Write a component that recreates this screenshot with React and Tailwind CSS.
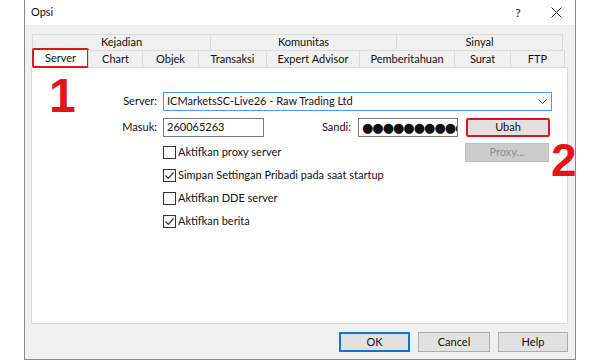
import React, { useState } from "react";

const font = { fontFamily: 'Lato, "Noto Sans", sans-serif' };
const digitFont = { fontFamily: '"Liberation Sans", Arial, sans-serif' };

const topTabs = [
  { label: "Kejadian", w: "w-[179px]" },
  { label: "Komunitas", w: "w-[187px]" },
  { label: "Sinyal", w: "w-[167px]" },
];

const bottomTabs = [
  { label: "Chart", w: "w-[55px]" },
  { label: "Objek", w: "w-[57px]" },
  { label: "Transaksi", w: "w-[69px]" },
  { label: "Expert Advisor", w: "w-[94px]" },
  { label: "Pemberitahuan", w: "w-[96px]" },
  { label: "Surat", w: "w-[57px]" },
  { label: "FTP", w: "w-[55px]" },
];

const Check = ({ checked, label, onToggle }) => (
  <label className="flex items-center h-[23px] cursor-default" onClick={onToggle}>
    <span className="w-[13px] h-[13px] border border-[#333] bg-white flex items-center justify-center mr-[2px] shrink-0">
      {checked && (
        <svg width="11" height="11" viewBox="0 0 11 11">
          <path d="M1.5 5.5 L4.3 8.3 L9.5 2.5" fill="none" stroke="#333" strokeWidth="1.2" />
        </svg>
      )}
    </span>
    <span className="text-[11px] text-[#111] whitespace-nowrap">{label}</span>
  </label>
);

const App = () => {
  const [checks, setChecks] = useState({
    proxy: false,
    simpan: true,
    dde: false,
    berita: true,
  });
  const toggle = (k) => setChecks({ ...checks, [k]: !checks[k] });

  return (
    <div className="w-[600px] h-[360px] bg-white" style={font}>
      <div className="ml-[24px] w-[552px] h-[360px] border border-[#8a8a8a] border-t-0 flex flex-col bg-[#f0f0f0]">
        {/* title bar */}
        <div className="h-[25px] bg-white flex items-center pl-[6px] text-[11px] text-[#111]">
          <span className="flex-1">Opsi</span>
          <span className="w-[38px] text-center text-[12px]">?</span>
          <span className="w-[38px] flex justify-center">
            <svg width="11" height="11" viewBox="0 0 11 11">
              <path d="M0.5 0.5 L10.5 10.5 M10.5 0.5 L0.5 10.5" stroke="#222" strokeWidth="1" />
            </svg>
          </span>
        </div>

        <div className="flex-1 flex flex-col pl-[6px] pr-[8px] pt-[9px]">
          {/* tabs */}
          <div className="flex text-[11px] text-[#111] h-[16px] pl-[1px]">
            {topTabs.map((t) => (
              <div
                key={t.label}
                className={`${t.w} h-[16px] border border-b-0 border-[#dadada] bg-[#f0f0f0] flex items-center justify-center -ml-px first:ml-0`}
              >
                {t.label}
              </div>
            ))}
          </div>
          <div className="flex text-[11px] text-[#111] h-[17px] relative z-10 pl-[1px]">
            <div className="w-[57px] h-[20px] -mt-[2px] border-2 border-[#e5141b] rounded-[2px] bg-white flex items-center justify-center shrink-0">
              Server
            </div>
            {bottomTabs.map((t) => (
              <div
                key={t.label}
                className={`${t.w} h-[17px] border border-b-0 border-[#dadada] bg-[#f0f0f0] flex items-center justify-center -ml-px shrink-0`}
              >
                {t.label}
              </div>
            ))}
          </div>

          {/* panel */}
          <div className="relative w-[537px] h-[257px] bg-white border border-[#dadada] pt-[24px] text-[11px] text-[#111]">
            <span className="absolute left-[17px] top-[4px] text-[#e5141b] text-[48px] leading-none font-black" style={digitFont}>
              1
            </span>
            <span className="absolute left-[519px] top-[69px] text-[#e5141b] text-[46px] leading-none font-black" style={digitFont}>
              2
            </span>

            <div className="flex items-center h-[19px]">
              <span className="w-[125px] text-right shrink-0">Server:</span>
              <div className="ml-[6px] w-[389px] h-[19px] border border-[#4d9ae3] flex items-center pl-[3px] pr-[4px]">
                <span className="flex-1">ICMarketsSC-Live26 - Raw Trading Ltd</span>
                <svg width="9" height="6" viewBox="0 0 9 6">
                  <path d="M0.5 0.5 L4.5 4.5 L8.5 0.5" fill="none" stroke="#444" strokeWidth="1" />
                </svg>
              </div>
            </div>

            <div className="flex items-center h-[19px] mt-[7px]">
              <span className="w-[125px] text-right shrink-0">Masuk:</span>
              <div className="ml-[6px] w-[101px] h-[19px] border border-[#7a7a7a] flex items-center pl-[3px] shrink-0">
                260065263
              </div>
              <span className="w-[87px] text-right shrink-0">Sandi:</span>
              <div
                className="ml-[7px] w-[100px] h-[19px] border border-[#7a7a7a] flex items-center pl-[3px] overflow-hidden text-[13px] tracking-[-1px] whitespace-nowrap shrink-0"
                style={{ fontFamily: '"DejaVu Sans", sans-serif' }}
              >
                ●●●●●●●●●●
              </div>
              <div className="ml-[8px] w-[84px] h-[19px] border-2 border-[#e5141b] rounded-[2px] bg-[#e1e1e1] flex items-center justify-center shrink-0">
                Ubah
              </div>
            </div>

            <div className="flex h-[23px] mt-[2px]">
              <div className="ml-[131px] mt-[2px] w-[302px] shrink-0">
                <Check checked={checks.proxy} label="Aktifkan proxy server" onToggle={() => toggle("proxy")} />
              </div>
              <div className="mt-[4px] w-[84px] h-[19px] bg-[#cccccc] border border-[#bfbfbf] flex items-center justify-center text-[#8d8d8d] shrink-0">
                Proxy...
              </div>
            </div>

            <div className="ml-[131px] mt-[2px] flex flex-col">
              <Check checked={checks.simpan} label="Simpan Settingan Pribadi pada saat startup" onToggle={() => toggle("simpan")} />
              <Check checked={checks.dde} label="Aktifkan DDE server" onToggle={() => toggle("dde")} />
              <Check checked={checks.berita} label="Aktifkan berita" onToggle={() => toggle("berita")} />
            </div>
          </div>

          {/* buttons */}
          <div className="flex justify-end gap-[8px] mt-[8px] -mr-[1px] text-[11px] text-[#111]">
            <button className="w-[71px] h-[20px] bg-[#e1e1e1] border-2 border-[#0078d7]">OK</button>
            <button className="w-[72px] h-[20px] bg-[#e1e1e1] border border-[#adadad]">Cancel</button>
            <button className="w-[70px] h-[20px] bg-[#e1e1e1] border border-[#adadad]">Help</button>
          </div>
        </div>
      </div>
    </div>
  );
};

export default App;
